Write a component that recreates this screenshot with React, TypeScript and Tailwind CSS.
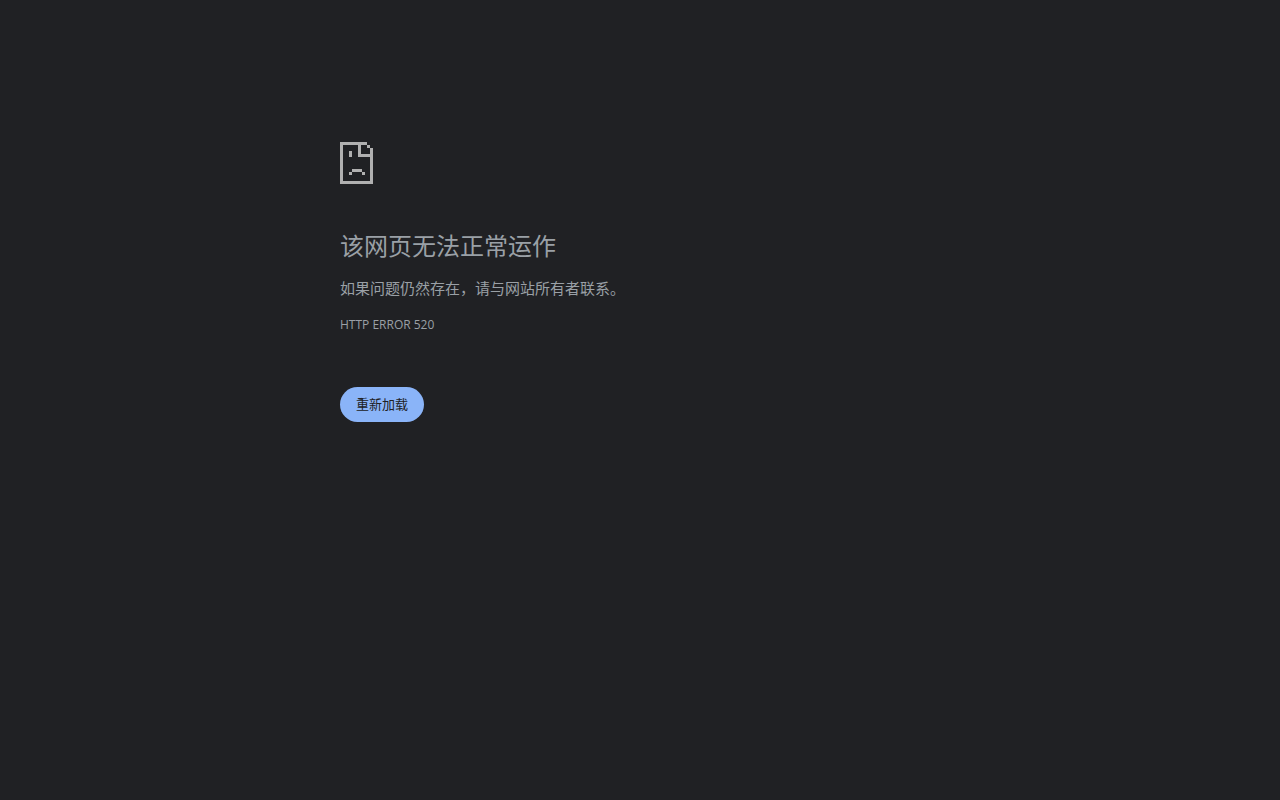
import React from 'react';

function SadPageIcon() {
  return (
    <svg
      viewBox="0 0 33 42"
      className="w-[33px] h-[42px]"
      fill="#b0b0b0"
      shapeRendering="crispEdges"
      aria-hidden="true"
    >
      {/* Sheet outline */}
      <path d="M0 0h27v3H3v36h27V6h3v36H0z" />
      {/* Folded corner */}
      <path d="M18 3h3v9h9v3H18zM27 3h3v3h-3z" />
      {/* Face */}
      <path d="M9 9h3v6H9zM12 27h10v3H12zM9 30h3v3H9zM22 30h3v3h-3z" />
    </svg>
  );
}

export default function App() {
  return (
    <main className="min-h-screen bg-[#202124] text-[#9aa0a6] font-['Open_Sans','Noto_Sans_CJK_SC',sans-serif]">
      <div className="mx-auto max-w-[600px] pt-[142px]">
        <SadPageIcon />

        <h1 className="mt-12 text-[24px] leading-7 font-normal">该网页无法正常运作</h1>
        <p className="mt-4 text-[15px] leading-6">如果问题仍然存在，请与网站所有者联系。</p>
        <div className="mt-[13px] text-[12px] leading-6">HTTP ERROR 520</div>

        <button
          type="button"
          className="mt-[50px] h-[35px] rounded-full bg-[#8ab4f8] px-4 text-[13px] text-[#202124]"
          onClick={() => window.location.reload()}
        >
          重新加载
        </button>
      </div>
    </main>
  );
}
